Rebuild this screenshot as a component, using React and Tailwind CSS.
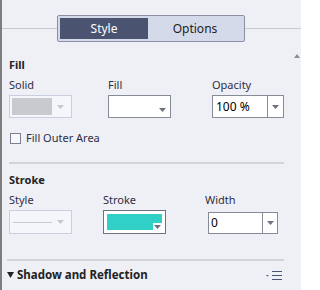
const Arrow = ({ className = "" }) => (
  <svg width="7" height="4" viewBox="0 0 7 4" className={className}>
    <path d="M0 0h7L3.5 4z" fill="currentColor" />
  </svg>
);

const Label = ({ children }) => (
  <div className="text-[11px] leading-[14px] text-[#2e2e42]">{children}</div>
);

const App = () => {
  return (
    <div
      className="w-[301px] h-[290px] bg-[#eff0f6] border-l-2 border-[#7d7d7d] overflow-hidden relative"
      style={{ fontFamily: '"Noto Sans", "Open Sans", sans-serif' }}
    >
      {/* tabs */}
      <div className="flex items-center pt-[15px]">
        <div className="w-[55px] h-px bg-[#c8c9cf]" />
        <div className="flex w-[188px] h-[27px] border border-[#8a8fa3] rounded-[2px] bg-[#d5daea] p-[2px]">
          <div className="w-[88px] bg-[#4a5470] text-white text-[12px] flex items-center justify-center">
            Style
          </div>
          <div className="flex-1 text-[#222] text-[12px] flex items-center justify-center">
            Options
          </div>
        </div>
        <div className="flex-1 h-px bg-[#c8c9cf]" />
      </div>
      <svg width="6" height="4" className="absolute left-[292px] top-[54px] text-[#8a8d96]">
        <path d="M0 4h6L3 0z" fill="currentColor" />
      </svg>

      {/* fill */}
      <div className="pl-[7px] pr-[15px]">
        <div className="pt-[16px] text-[11px] leading-[14px] font-bold text-[#222]">Fill</div>
        <div className="flex pt-[6px]">
          <div className="w-[99px]">
            <Label>Solid</Label>
            <div className="mt-[3px] w-[63px] h-[23px] border border-[#c9cfe0] bg-[#f5f6fa] flex items-center pl-[2px] pr-[5px] gap-[5px]">
              <div className="w-[40px] h-[17px] bg-[#c9cace]" />
              <Arrow className="text-[#c4c8d2]" />
            </div>
          </div>
          <div className="w-[104px]">
            <Label>Fill</Label>
            <div className="mt-[3px] w-[63px] h-[23px] border border-[#878b98] bg-white flex items-end justify-end pr-[4px] pb-[5px]">
              <Arrow className="text-[#6d7180]" />
            </div>
          </div>
          <div>
            <Label>Opacity</Label>
            <div className="mt-[3px] w-[72px] h-[23px] border border-[#878b98] bg-white flex">
              <div className="flex-1 text-[12px] text-black pl-[3px] flex items-center">100 %</div>
              <div className="w-[16px] border-l border-[#878b98] flex items-center justify-center">
                <Arrow className="text-[#6d7180]" />
              </div>
            </div>
          </div>
        </div>
        <div className="flex items-center gap-[5px] pt-[13px] pl-[1px]">
          <div className="w-[11px] h-[11px] border border-[#7c8090] bg-[#f8f8fb]" />
          <span className="text-[11px] leading-[14px] text-[#2e2e42]">Fill Outer Area</span>
        </div>
        <div className="mt-[17px] mr-[2px] h-[2px] bg-[#d3d4da]" />

        {/* stroke */}
        <div className="pt-[9px] text-[11px] leading-[14px] font-bold text-[#222]">Stroke</div>
        <div className="flex pt-[6px]">
          <div className="w-[94px]">
            <Label>Style</Label>
            <div className="mt-[3px] w-[63px] h-[24px] border border-[#c9cfe0] bg-[#f5f6fa] flex items-center pl-[3px] pr-[5px] gap-[5px]">
              <div className="w-[39px] h-px bg-[#c9cace]" />
              <Arrow className="text-[#c4c8d2]" />
            </div>
          </div>
          <div className="w-[102px]">
            <Label>Stroke</Label>
            <div className="mt-[3px] w-[63px] h-[24px] border border-[#6d7180] bg-white p-[3px]">
              <div className="flex flex-col h-full">
                <div className="h-[9px] bg-[#30d0c6]" />
                <div className="flex flex-1">
                  <div className="w-[46px] bg-[#30d0c6]" />
                  <div className="flex-1 flex items-end justify-center pb-[1px]">
                    <Arrow className="text-[#6d7180]" />
                  </div>
                </div>
              </div>
            </div>
          </div>
          <div>
            <Label>Width</Label>
            <div className="mt-[5px] ml-[3px] w-[70px] h-[22px] border border-[#878b98] bg-white flex">
              <div className="flex-1 text-[12px] text-black pl-[2px] flex items-center">0</div>
              <div className="w-[15px] border-l border-[#878b98] flex items-center justify-center">
                <Arrow className="text-[#6d7180]" />
              </div>
            </div>
          </div>
        </div>
        <div className="mt-[25px] -ml-[2px] mr-[2px] h-[2px] bg-[#d3d4da]" />

        {/* shadow */}
        <div className="flex items-center pt-[6px] -ml-[2px]">
          <svg width="7" height="6" className="text-[#222]">
            <path d="M0 0h7L3.5 6z" fill="currentColor" />
          </svg>
          <span className="ml-[3px] text-[11.5px] leading-[16px] font-bold text-[#222]">
            Shadow and Reflection
          </span>
          <div className="flex-1" />
          <svg width="17" height="13" viewBox="0 0 17 13" className="text-[#4a5470] mr-[3px]">
            <path d="M0 6h3L1.5 7.5z" fill="currentColor" />
            <path d="M6 2.5h10M6 6.5h10M6 10.5h10" stroke="currentColor" strokeWidth="1" />
          </svg>
        </div>
      </div>
    </div>
  );
};

export default App;
